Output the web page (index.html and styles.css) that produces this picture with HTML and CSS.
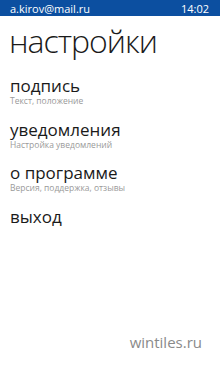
FILE: index.html
```html
<!DOCTYPE html>
<html>
<head>
<meta charset="utf-8">
<link rel="stylesheet" href="styles.css">
</head>
<body>
<div class="screen">
  <div class="status">
    <span class="account">a.kirov@mail.ru</span>
    <span class="time">14:02</span>
  </div>
  <h1 class="title">настройки</h1>
  <ul class="menu">
    <li class="item">
      <div class="item-title">подпись</div>
      <div class="item-sub">Текст, положение</div>
    </li>
    <li class="item">
      <div class="item-title">уведомления</div>
      <div class="item-sub">Настройка уведомлений</div>
    </li>
    <li class="item">
      <div class="item-title">о программе</div>
      <div class="item-sub">Версия, поддержка, отзывы</div>
    </li>
    <li class="item">
      <div class="item-title">выход</div>
    </li>
  </ul>
  <div class="watermark">wintiles.ru</div>
</div>
</body>
</html>
```
FILE: styles.css
```css
html, body {
  margin: 0;
  padding: 0;
  background: #ffffff;
}
.screen {
  width: 220px;
  height: 366px;
  display: flex;
  flex-direction: column;
  font-family: "Open Sans", "Noto Sans", sans-serif;
  color: #1a1a1a;
  overflow: hidden;
}
.status {
  height: 16px;
  background: #0c4fa0;
  color: #ffffff;
  display: flex;
  justify-content: space-between;
  align-items: center;
  padding: 0 11px 0 10px;
  font-size: 11px;
}
.title {
  margin: 8px 0 0 9px;
  font-size: 32px;
  font-weight: 300;
  line-height: 34px;
  letter-spacing: -1px;
}
.menu {
  list-style: none;
  margin: 18px 0 0 10px;
  padding: 0;
}
.item {
  height: 43.5px;
}
.item-title {
  font-size: 17px;
  line-height: 19px;
}
.item-sub {
  font-size: 8.5px;
  line-height: 11px;
  color: #9a9a9a;
}
.watermark {
  margin-top: auto;
  align-self: flex-end;
  margin-right: 18px;
  margin-bottom: 14px;
  font-size: 15px;
  color: #8a8a8a;
}
```
